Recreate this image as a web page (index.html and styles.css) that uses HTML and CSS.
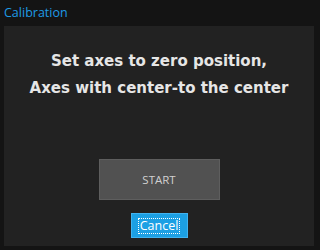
FILE: index.html
```html
<!DOCTYPE html>
<html>
<head>
<meta charset="utf-8">
<link rel="stylesheet" href="styles.css">
</head>
<body>
<div class="window">
  <div class="title">Calibration</div>
  <div class="panel">
    <div class="message">
      <div>Set axes to zero position,</div>
      <div>Axes with center-to the center</div>
    </div>
    <button class="start">START</button>
    <button class="cancel"><span class="focus">Cancel</span></button>
  </div>
</div>
</body>
</html>
```
FILE: styles.css
```css
html, body {
  margin: 0;
  padding: 0;
  background: #141414;
}
.window {
  width: 318px;
  height: 250px;
  display: flex;
  flex-direction: column;
}
.title {
  height: 26px;
  box-sizing: border-box;
  padding: 4px 0 0 4px;
  font-family: "Open Sans", sans-serif;
  font-size: 12.5px;
  line-height: 18px;
  color: #1e9be6;
}
.panel {
  margin: 0 4px;
  height: 220px;
  background: #222222;
  display: flex;
  flex-direction: column;
  align-items: center;
  box-sizing: border-box;
  padding-top: 22px;
}
.message {
  font-family: "DejaVu Sans", sans-serif;
  font-weight: bold;
  font-size: 15px;
  line-height: 27px;
  color: #e6e6e6;
  text-align: center;
}
.start {
  margin-top: 57px;
  width: 121px;
  height: 41px;
  background: #515151;
  border: 1px solid #5e5e5e;
  color: #d0d0d0;
  font-family: "Open Sans", sans-serif;
  font-size: 11.5px;
  padding: 0;
}
.cancel {
  margin-top: 13px;
  width: 57px;
  height: 25px;
  background: #1ca0e4;
  border: 1px solid #41b3f0;
  color: #ffffff;
  font-family: "Open Sans", sans-serif;
  font-size: 12.5px;
  padding: 0;
  display: flex;
  align-items: center;
  justify-content: center;
}
.focus {
  outline: 1px dotted #ffffff;
  padding: 0 1px;
  line-height: 14px;
}
```
